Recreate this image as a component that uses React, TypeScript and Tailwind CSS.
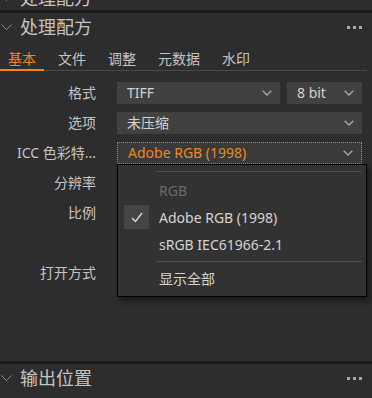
import React from 'react';

const font = { fontFamily: '"Noto Sans", "Noto Sans CJK SC", sans-serif' };

const tabs = ['基本', '文件', '调整', '元数据', '水印'];

function Chevron() {
  return (
    <svg width="11" height="6" viewBox="0 0 11 6" className="shrink-0">
      <polyline points="0.5,0.5 5.5,5.5 10.5,0.5" fill="none" stroke="#8c8c8c" strokeWidth="1" />
    </svg>
  );
}

function Dots() {
  return (
    <div className="flex gap-[3px]">
      <span className="w-[3px] h-[3px] bg-[#a8a8a8]" />
      <span className="w-[3px] h-[3px] bg-[#a8a8a8]" />
      <span className="w-[3px] h-[3px] bg-[#a8a8a8]" />
    </div>
  );
}

function SectionHeader({ title }: { title: string }) {
  return (
    <div className="h-[28px] flex items-center pl-[1px] pr-[10px]">
      <Chevron />
      <span className="ml-[8px] text-[18px] leading-none text-[#c4c4c4]">{title}</span>
      <div className="flex-1" />
      <Dots />
    </div>
  );
}

function Caret() {
  return (
    <svg width="10" height="6" viewBox="0 0 10 6" className="shrink-0">
      <polyline points="0.7,0.7 5,5 9.3,0.7" fill="none" stroke="#a6a6a6" strokeWidth="1.3" />
    </svg>
  );
}

function Select({ value, className = '', accent = false }: { value: string; className?: string; accent?: boolean }) {
  return (
    <div
      className={
        'h-[22px] flex items-center pl-[10px] pr-[8px] ' +
        (accent ? 'border border-dotted border-[#8a8a8a] bg-[#3a3a3a] ' : 'bg-[#414141] ') +
        className
      }
    >
      <span className={'flex-1 text-[14px] leading-none ' + (accent ? 'text-[#f0861e]' : 'text-[#d2d2d2]')}>{value}</span>
      <Caret />
    </div>
  );
}

function Row({ label, children }: { label: string; children?: React.ReactNode }) {
  return (
    <div className="h-[22px] flex items-center">
      <div className="w-[96px] text-right text-[14px] leading-none text-[#c4c4c4] whitespace-nowrap">{label}</div>
      <div className="ml-[21px] flex-1 flex gap-[7px] mr-[10px]">{children}</div>
    </div>
  );
}

export default function App() {
  return (
    <div className="w-[372px] h-[398px] bg-[#2d2d2d] overflow-hidden flex flex-col" style={font}>
      <div className="h-[10px] overflow-hidden">
        <div className="-mt-[16px]">
          <SectionHeader title="处理配方" />
        </div>
      </div>
      <div className="h-[3px] bg-[#1b1b1b]" />
      <SectionHeader title="处理配方" />

      <div className="flex gap-[6px] border-b border-[#494949] mr-[5px] h-[30px]">
        {tabs.map((t, i) => (
          <div
            key={t}
            className={
              'px-2 pt-[8px] text-[14px] leading-[20px] -mb-px border-b-2 ' +
              (i === 0 ? 'text-[#f0861e] border-[#f0861e]' : 'text-[#c4c4c4] border-transparent')
            }
          >
            {t}
          </div>
        ))}
      </div>

      <div className="relative flex-1 flex flex-col gap-[8px] pt-[11px]">
        <Row label="格式">
          <Select value="TIFF" className="w-[163px]" />
          <Select value="8 bit" className="flex-1" />
        </Row>
        <Row label="选项">
          <Select value="未压缩" className="flex-1" />
        </Row>
        <Row label="ICC 色彩特...">
          <Select value="Adobe RGB (1998)" className="flex-1" accent />
        </Row>
        <Row label="分辨率" />
        <Row label="比例" />
        <Row label="" />
        <Row label="打开方式" />

        <div className="absolute left-[117px] top-[93px] w-[250px] h-[133px] bg-[#323232] border border-black shadow-[3px_4px_6px_rgba(0,0,0,0.45)] text-[14px]">
          <div className="ml-[38px] mr-[4px] mt-[6px] h-px bg-[#4e4e4e]" />
          <div className="h-[24px] mt-[6px] flex items-center pl-[41px] text-[#6a6a6a]">RGB</div>
          <div className="h-[24px] mt-[3px] flex items-center pl-[6px] text-[#d4d4d4]">
            <div className="w-[25px] h-[24px] bg-[#454545] flex items-center justify-center">
              <svg width="12" height="11" viewBox="0 0 12 11">
                <polyline points="1,6 4.5,9.5 11,1" fill="none" stroke="#d8d8d8" strokeWidth="1.4" />
              </svg>
            </div>
            <span className="ml-[10px]">Adobe RGB (1998)</span>
          </div>
          <div className="h-[24px] mt-[3px] flex items-center pl-[41px] text-[#d4d4d4]">sRGB IEC61966-2.1</div>
          <div className="ml-[38px] mr-[4px] mt-[5px] h-px bg-[#4e4e4e]" />
          <div className="h-[24px] mt-[4px] flex items-center pl-[41px] text-[#d4d4d4]">显示全部</div>
        </div>
      </div>

      <div className="h-[3px] bg-[#1b1b1b]" />
      <div className="pb-[6px]">
        <SectionHeader title="输出位置" />
      </div>
    </div>
  );
}
